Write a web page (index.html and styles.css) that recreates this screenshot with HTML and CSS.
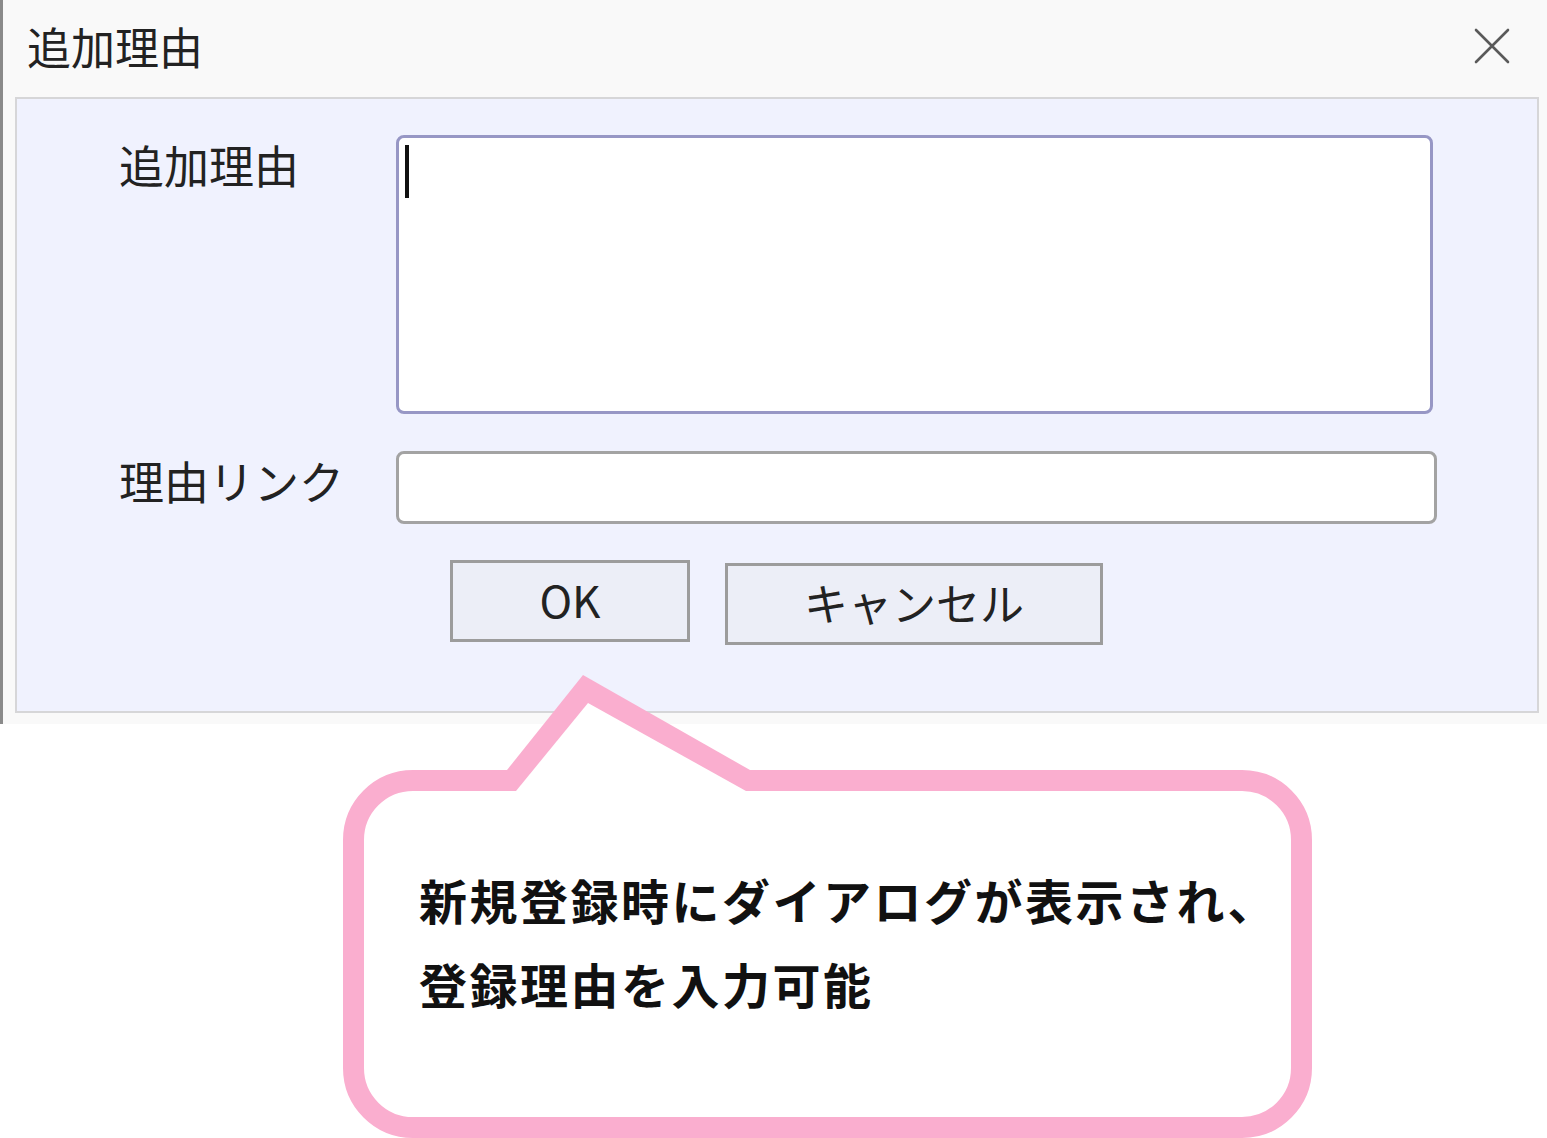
FILE: index.html
```html
<!DOCTYPE html>
<html>
<head>
  <meta charset="utf-8"/>
  <title>追加理由</title>
  <link rel="stylesheet" href="styles.css">
</head>
<body>

  <!-- ---------- DIALOG WINDOW ---------- -->
  <div class="dialog">
    <!-- Title bar -->
    <div class="titlebar">
      <span class="title">追加理由</span>
      <svg class="close" width="36" height="36" viewBox="0 0 36 36">
        <path d="M2 2 L34 34 M34 2 L2 34" stroke="#5a5a5a" stroke-width="2.6" stroke-linecap="round" fill="none"/>
      </svg>
    </div>

    <!-- Form panel -->
    <div class="panel">
      <div class="form-grid">
        <div class="label">追加理由</div>
        <div class="textbox"><span class="caret"></span></div>

        <div class="label">理由リンク</div>
        <div class="inputbox"></div>
      </div>

      <div class="buttons">
        <div class="btn btn-ok">OK</div>
        <div class="btn btn-cancel">キャンセル</div>
      </div>
    </div>
  </div>

  <!-- ---------- CALLOUT ---------- -->
  <div class="callout">
    <!-- tail pointing at the OK button -->
    <svg class="tail" width="420" height="130" viewBox="0 0 420 130">
      <polygon points="164,95 240,0 407,95" fill="#faaecf"/>
      <polygon points="173,116 245,28 403,116" fill="#fff"/>
    </svg>
    <p class="callout-text">新規登録時にダイアログが表示され、<br>登録理由を入力可能</p>
  </div>

</body>
</html>
```

FILE: styles.css
```css
/* Basic reset */
* {
  box-sizing: border-box;
  margin: 0;
  padding: 0;
}
body {
  font-family: "Noto Sans CJK JP", "Noto Sans", sans-serif;
  background: #fff;
  color: #1a1a1a;
  width: 1547px;
  overflow: hidden;
}

/* ---------- DIALOG WINDOW ---------- */
.dialog {
  background: #f9f9f9;
  border-left: 3px solid #8a8a8a;
  height: 724px;
}
.titlebar {
  height: 97px;
  display: flex;
  align-items: center;
  justify-content: space-between;
  padding: 0 37px 6px 24px;
}
.title {
  font-size: 44px;
  line-height: 1;
  color: #222;
}

/* ---------- FORM PANEL ---------- */
.panel {
  margin: 0 8px 0 12px;
  background: #f0f2fe;
  border: 2px solid #d6d6d8;
  padding: 36px 0 66px 102px;
}
.form-grid {
  display: grid;
  grid-template-columns: 277px auto;
  row-gap: 37px;
  justify-items: start;
}
.label {
  font-size: 45px;
  line-height: 53px;
  padding-top: 3px;
  color: #222;
}
.textbox {
  width: 1037px;
  height: 279px;
  background: #fff;
  border: 3px solid #9797c5;
  border-radius: 8px;
  padding: 7px 6px;
}
.caret {
  display: block;
  width: 4px;
  height: 53px;
  background: #111;
}
.inputbox {
  width: 1041px;
  height: 73px;
  background: #fff;
  border: 3px solid #a3a3a3;
  border-radius: 8px;
}

/* Buttons */
.buttons {
  display: flex;
  align-items: flex-start;
  gap: 35px;
  margin: 36px 0 0 331px;
}
.btn {
  height: 82px;
  background: #eceef7;
  border: 3px solid #9c9c9c;
  display: flex;
  align-items: center;
  justify-content: center;
  padding-bottom: 4px;
  font-size: 44px;
  color: #222;
}
.btn-ok {
  width: 240px;
}
.btn-cancel {
  width: 378px;
  margin-top: 3px;
}

/* ---------- CALLOUT ---------- */
.callout {
  position: relative;
  width: 969px;
  height: 368px;
  margin: 46px 0 0 343px;
  border: 21px solid #faaecf;
  border-radius: 70px;
  background: #fff;
}
.callout .tail {
  position: absolute;
  top: -116px;
  left: -21px;
}
.callout-text {
  padding: 66px 0 0 55px;
  font-size: 48px;
  font-weight: 700;
  line-height: 84px;
  letter-spacing: 2.5px;
  color: #111;
}
```
